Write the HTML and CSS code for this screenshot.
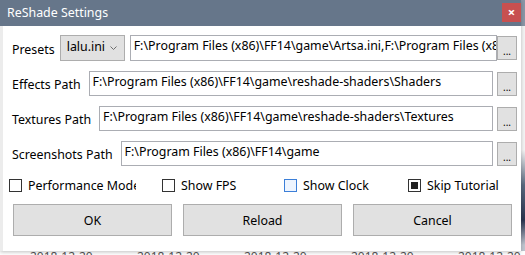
FILE: index.html
```html
<!DOCTYPE html>
<html lang="en">
<head>
    <meta charset="UTF-8">
    <title>ReShade Settings</title>
    <link rel="stylesheet" href="styles.css">
</head>
<body>
<div class="desk">
    <div class="window">
        <div class="titlebar">
            <span class="title">ReShade Settings</span>
            <span class="close">&#215;</span>
        </div>
        <div class="content">
            <div class="row presets">
                <label>Presets</label>
                <div class="combo">
                    <span>lalu.ini</span>
                    <svg class="arrow" width="7" height="4" viewBox="0 0 7 4"><path d="M0.5 0.5 L3.5 3.5 L6.5 0.5" fill="none" stroke="#6d6d6d" stroke-width="1"/></svg>
                </div>
                <div class="field">F:\Program Files (x86)\FF14\game\Artsa.ini,F:\Program Files (x86)\FF14\game\lalu.ini</div>
                <button class="browse">...</button>
            </div>
            <div class="row">
                <label>Effects Path</label>
                <div class="field">F:\Program Files (x86)\FF14\game\reshade-shaders\Shaders</div>
                <button class="browse">...</button>
            </div>
            <div class="row">
                <label>Textures Path</label>
                <div class="field">F:\Program Files (x86)\FF14\game\reshade-shaders\Textures</div>
                <button class="browse">...</button>
            </div>
            <div class="row">
                <label>Screenshots Path</label>
                <div class="field">F:\Program Files (x86)\FF14\game</div>
                <button class="browse">...</button>
            </div>
            <div class="checks">
                <div class="check"><span class="box"></span><span class="cap">Performance Mode</span></div>
                <div class="check"><span class="box"></span><span class="cap">Show FPS</span></div>
                <div class="check"><span class="box hover"></span><span class="cap">Show Clock</span></div>
                <div class="check"><span class="box checked"></span><span class="cap">Skip Tutorial</span></div>
            </div>
            <div class="buttons">
                <button class="btn">OK</button>
                <button class="btn">Reload</button>
                <button class="btn">Cancel</button>
            </div>
        </div>
    </div>
    <div class="edge"></div>
</div>
<div class="dates">
    <span>2018-12-20</span>
    <span>2018-12-20</span>
    <span>2018-12-20</span>
    <span>2018-12-20</span>
    <span>2018-12-20</span>
</div>
</body>
</html>
```

FILE: styles.css
```css
* {
    margin: 0;
    padding: 0;
    box-sizing: border-box;
    font-family: "Noto Sans", "Open Sans", sans-serif;
}
body {
    width: 525px;
    height: 255px;
    overflow: hidden;
    background: #f2f2f2;
    color: #000;
    font-size: 12.4px;
}
.desk {
    display: flex;
    height: 251px;
}
.window {
    width: 521px;
    height: 251px;
    background: #fff;
    border-left: 3px solid #ececec;
    box-shadow: 0 1px 4px rgba(0,0,0,0.25);
    position: relative;
    z-index: 1;
}
.edge {
    flex: 1;
    background: linear-gradient(#8a96a6 0, #8a96a6 26px, #f4f4f4 26px, #f4f4f4 150px, #5a6a80 185px, #2a3450 220px, #c0c6d0 245px);
}
.titlebar {
    height: 26px;
    margin-left: -3px;
    background: #66768a;
    display: flex;
    align-items: flex-start;
    justify-content: space-between;
}
.title {
    color: #fff;
    font-size: 12.4px;
    line-height: 26px;
    padding-left: 7px;
}
.close {
    margin-top: 3px;
    width: 19px;
    height: 19px;
    background: #c75050;
    color: #fff;
    font-size: 13px;
    font-weight: bold;
    line-height: 18px;
    text-align: center;
}
.content {
    padding: 9px 4px 0 9px;
}
.row {
    display: flex;
    align-items: center;
    height: 25px;
    margin-bottom: 10px;
}
.row.presets {
    height: 26px;
}
.row label {
    margin-right: 8px;
    padding-top: 2px;
    white-space: nowrap;
}
.presets label {
    margin-right: 5px;
}
.combo {
    width: 65px;
    height: 26px;
    margin-right: 5px;
    background: #e1e1e1;
    border: 1px solid #adadad;
    display: flex;
    justify-content: space-between;
    padding: 2px 7px 2px 6px;
    line-height: 18px;
}
.arrow {
    margin-top: 8px;
}
.field {
    flex: 1;
    min-width: 0;
    height: 25px;
    border: 1px solid #abadb3;
    padding: 1px 3px;
    line-height: 18px;
    white-space: nowrap;
    overflow: hidden;
    margin-right: 4px;
}
.presets .field {
    height: 26px;
    margin-right: 0;
}
.browse {
    width: 20px;
    height: 24px;
    background: #e1e1e1;
    border: 1px solid #adadad;
    font-size: 10px;
    line-height: 20px;
    padding-top: 4px;
    position: relative;
    z-index: 1;
}
.checks {
    display: grid;
    grid-template-columns: 153px 122px 124px auto;
    margin: 1px 0 0 -3px;
    height: 18px;
    align-items: center;
}
.check {
    display: flex;
    align-items: center;
    overflow: hidden;
    white-space: nowrap;
}
.check:first-child {
    width: 127px;
}
.box {
    flex: none;
    width: 13px;
    height: 13px;
    border: 1px solid #333;
    background: #fff;
    margin-right: 6px;
}
.box.hover {
    border-color: #3c7fd8;
    background: #eef5ff;
}
.box.checked {
    border-color: #333;
    background: #222;
    box-shadow: inset 0 0 0 2px #fff;
}
.buttons {
    display: flex;
    gap: 11px;
    margin-top: 10px;
    padding-left: 1px;
}
.btn {
    width: 159px;
    height: 32px;
    background: #e1e1e1;
    border: 1px solid #adadad;
    font-size: 12.4px;
}
.dates {
    display: flex;
    gap: 42px;
    padding-left: 30px;
    height: 4px;
    overflow: hidden;
    background: #fff;
}
.dates span {
    color: #555;
    font-size: 12px;
    line-height: 12px;
    margin-top: 0;
    flex: none;
    width: 65px;
}
```
